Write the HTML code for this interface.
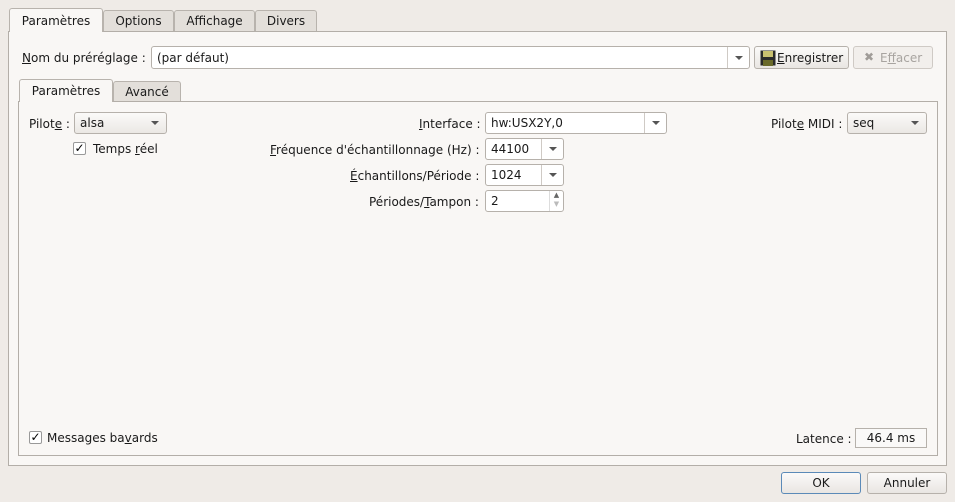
<!DOCTYPE html>
<html><head><meta charset="utf-8"><style>
*{box-sizing:border-box;margin:0;padding:0}
body{width:955px;height:502px;background:#efebe7;font-family:"DejaVu Sans","Liberation Sans",sans-serif;font-size:12px;color:#1a1a1a;position:relative;overflow:hidden}
.a{position:absolute;white-space:nowrap}
.tab{position:absolute;border:1px solid #b8b3ad;border-bottom:none;background:#e3dfda;border-radius:3px 3px 0 0;text-align:center;line-height:21px}
.tab.on{background:#f9f7f5;z-index:2}
.pane{position:absolute;border:1px solid #b3aea8;background:#f9f7f5}
.box{position:absolute;border:1px solid #b6b1ab;background:#fff;border-radius:3px;line-height:21px;padding-left:5px}
.dd{position:absolute;border:1px solid #b6b1ab;background:linear-gradient(#fbfaf9,#ebe8e4);border-radius:3px;line-height:21px;padding-left:5px}
.arr{position:absolute;right:0;top:0;bottom:0;width:22px;border-left:1px solid #cfcac5}
.arr:after,.tri:after{content:"";position:absolute;left:50%;top:50%;margin:-2px 0 0 -4px;border:4px solid transparent;border-top:4px solid #555;border-bottom:none}
.tri{position:absolute;right:0;top:0;bottom:0;width:22px}
.btn{position:absolute;border:1px solid #b6b1ab;border-radius:3px;background:linear-gradient(#fbfaf9,#e9e6e2);text-align:center;line-height:21px}
.cb{position:absolute;width:13px;height:13px;border:1px solid #999;background:#fff;border-radius:2px;font-size:12px;line-height:11px;text-align:center;font-weight:bold;color:#000}
u{text-decoration:underline}
</style></head><body>
<div class="pane" style="left:8px;top:31px;width:939px;height:435px"></div>
<div class="tab on" style="left:9px;top:8px;width:94px;height:24px;line-height:24px">Paramètres</div>
<div class="tab" style="left:103px;top:10px;width:71px;height:21px">Options</div>
<div class="tab" style="left:174px;top:10px;width:81px;height:21px">Affichage</div>
<div class="tab" style="left:255px;top:10px;width:62px;height:21px">Divers</div>

<div class="a" style="left:22px;top:51px"><u>N</u>om du préréglage :</div>
<div class="box" style="left:151px;top:46px;width:599px;height:23px;line-height:22px">(par défaut)<div class="arr"></div></div>
<div class="btn" style="left:754px;top:46px;width:95px;height:23px;text-align:left;padding-left:4px">
<svg width="16" height="16" style="position:absolute;left:5px;top:3px"><rect x="0.5" y="0.5" width="15" height="15" fill="#2a2a2a"/><rect x="3" y="1" width="10" height="6" fill="#c8c070"/><rect x="3" y="10" width="10" height="6" fill="#6a6a2a"/></svg>
<span style="position:absolute;left:22px;top:1px"><u>E</u>nregistrer</span></div>
<div class="btn" style="left:853px;top:46px;width:80px;height:23px;color:#a8a4a0;background:#f2efec;border-color:#cfcac5">
<span style="position:absolute;left:10px;top:0;font-weight:bold;color:#a09c98">✖</span><span style="position:absolute;left:26px;top:1px">E<u>f</u>facer</span></div>

<div class="pane" style="left:18px;top:101px;width:920px;height:355px"></div>
<div class="tab on" style="left:19px;top:79px;width:94px;height:23px;line-height:23px">Paramètres</div>
<div class="tab" style="left:113px;top:81px;width:68px;height:20px">Avancé</div>

<div class="a" style="left:29px;top:117px">Pilot<u>e</u> :</div>
<div class="dd" style="left:74px;top:112px;width:93px;height:22px">alsa<div class="tri"></div></div>
<div class="cb" style="left:73px;top:142px">✓</div>
<div class="a" style="left:93px;top:142px">Temps <u>r</u>éel</div>

<div class="a" style="left:419px;top:117px"><u>I</u>nterface :</div>
<div class="box" style="left:485px;top:112px;width:182px;height:22px">hw:USX2Y,0<div class="arr"></div></div>
<div class="a" style="left:270px;top:143px"><u>F</u>réquence d'échantillonnage (Hz) :</div>
<div class="box" style="left:485px;top:138px;width:79px;height:22px">44100<div class="arr"></div></div>
<div class="a" style="left:350px;top:169px"><u>É</u>chantillons/Période :</div>
<div class="box" style="left:485px;top:164px;width:79px;height:22px">1024<div class="arr"></div></div>
<div class="a" style="left:369px;top:195px">Périodes/<u>T</u>ampon :</div>
<div class="box" style="left:485px;top:190px;width:79px;height:22px">2<div style="position:absolute;right:0;top:0;bottom:0;width:14px;border-left:1px solid #ddd;font-size:7px;line-height:9px;text-align:center;color:#666">▲<br><span style="color:#bbb">▼</span></div></div>

<div class="a" style="left:771px;top:117px">Pilot<u>e</u> MIDI :</div>
<div class="dd" style="left:847px;top:112px;width:80px;height:22px">seq<div class="tri"></div></div>

<div class="cb" style="left:29px;top:431px">✓</div>
<div class="a" style="left:47px;top:431px">Messages ba<u>v</u>ards</div>
<div class="a" style="left:796px;top:432px">Latence :</div>
<div class="a" style="left:855px;top:428px;width:72px;height:20px;border:1px solid #b6b1ab;background:#faf9f8;text-align:center;line-height:19px">46.4 ms</div>

<div class="btn" style="left:781px;top:472px;width:80px;height:22px;border-color:#5b8ab8">OK</div>
<div class="btn" style="left:867px;top:472px;width:80px;height:22px">Annuler</div>
</body></html>
